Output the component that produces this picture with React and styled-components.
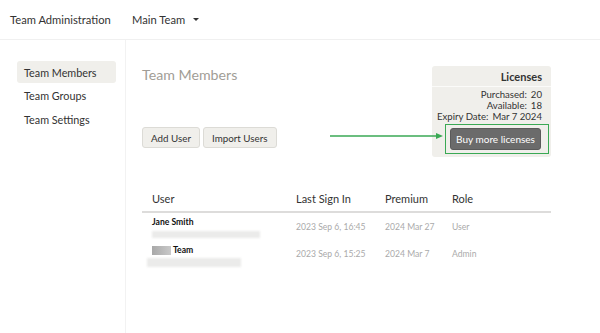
import React from "react";
import styled, { createGlobalStyle } from "styled-components";

const Global = createGlobalStyle`
  html, body { margin: 0; padding: 0; background: #fff; }
  body { font-family: Lato, "Open Sans", sans-serif; color: #333; }
  * { box-sizing: border-box; }
`;

const Page = styled.div`
  min-height: 100vh;
  display: flex;
  flex-direction: column;
`;

const TopBar = styled.header`
  height: 40px;
  display: flex;
  align-items: center;
  padding-left: 10px;
  border-bottom: 1px solid #f0f0f0;
  font-size: 11.2px;
  color: #333;
`;

const Brand = styled.div`
  width: 122px;
`;

const TeamPicker = styled.div`
  display: flex;
  align-items: center;
  gap: 8px;
`;

const Caret = styled.span`
  width: 0;
  height: 0;
  border-left: 3px solid transparent;
  border-right: 3px solid transparent;
  border-top: 3px solid #333;
`;

const Body = styled.div`
  flex: 1;
  display: flex;
`;

const Sidebar = styled.nav`
  width: 126px;
  border-right: 1px solid #f2f2f2;
  padding: 21px 9px 0 17px;
  display: flex;
  flex-direction: column;
  gap: 1.5px;
`;

const NavItem = styled.div`
  height: 22px;
  display: flex;
  align-items: center;
  padding-left: 7px;
  border-radius: 3px;
  font-size: 10.8px;
  color: #333;
  background: ${(p) => (p.$active ? "#f0efeb" : "transparent")};
`;

const Main = styled.main`
  flex: 1;
  padding: 26px 49px 0 16px;
  display: flex;
  flex-direction: column;
`;

const TopRow = styled.div`
  display: flex;
  justify-content: space-between;
  align-items: flex-start;
`;

const LeftCol = styled.div`
  display: flex;
  flex-direction: column;
`;

const Heading = styled.h1`
  margin: 0;
  font-size: 14.2px;
  font-weight: 400;
  color: #a19d96;
  line-height: 18px;
`;

const ButtonRow = styled.div`
  display: flex;
  gap: 3px;
  margin-top: 43px;
`;

const LightButton = styled.button`
  height: 21px;
  padding: 0 8px;
  font-family: inherit;
  font-size: 9.8px;
  color: #333;
  background: #f0efeb;
  border: 1px solid #dcdbd6;
  border-radius: 3px;
`;

const Card = styled.section`
  position: relative;
  width: 119px;
  background: #f0efeb;
  border-radius: 3px;
  padding-bottom: 7px;
  text-align: right;
  font-size: 9.6px;
  line-height: 11px;
  color: #333;
`;

const CardTitle = styled.div`
  font-weight: 700;
  font-size: 11px;
  padding: 5px 9px 4px 0;
  border-bottom: 1px solid #fbfbf9;
`;

const CardLines = styled.div`
  padding: 2px 9px 0 0;
`;

const InfoLine = styled.div`
  display: flex;
  justify-content: flex-end;
  gap: 4px;
`;

const BuyWrap = styled.div`
  position: relative;
  display: flex;
  justify-content: flex-end;
  padding: 6px 10px 0 0;
`;

const DarkButton = styled.button`
  width: 91px;
  height: 22px;
  font-family: inherit;
  font-size: 10px;
  color: #fff;
  background: #6b6b6b;
  border: 1px solid #5a5a5a;
  border-radius: 3px;
  padding: 0;
`;

const Highlight = styled.div`
  position: absolute;
  left: 13px;
  top: 2px;
  width: 104px;
  height: 30px;
  border: 1.5px solid #3aa954;
`;

const Arrow = styled.svg`
  position: absolute;
  left: -102px;
  top: 66px;
  overflow: visible;
`;

const Table = styled.div`
  margin-top: 28px;
  display: grid;
  grid-template-columns: 144px 89px 67px 1fr;
`;

const HeadCell = styled.div`
  height: 28px;
  display: flex;
  align-items: center;
  padding-left: 10px;
  font-size: 11px;
  color: #333;
  border-bottom: 2px solid #dddcdb;
`;

const Cell = styled.div`
  height: ${(p) => (p.$h ? p.$h : 27)}px;
  display: flex;
  align-items: center;
  padding-left: 10px;
  font-size: 8.6px;
  color: #aaa;
`;

const UserCell = styled.div`
  height: ${(p) => p.$h}px;
  padding: ${(p) => p.$pt}px 0 0 10px;
  display: flex;
  flex-direction: column;
`;

const NameLine = styled.div`
  display: flex;
  align-items: center;
  gap: 2px;
  font-size: 8.6px;
  font-weight: 700;
  color: #111;
  line-height: 11px;
`;

const Avatar = styled.span`
  width: 19px;
  height: 9px;
  background: linear-gradient(90deg, #a8a8a8, #c9c9c9);
`;

const Blur = styled.div`
  width: ${(p) => p.$w}px;
  height: ${(p) => p.$hh}px;
  margin-left: ${(p) => p.$ml}px;
  margin-top: ${(p) => p.$mt}px;
  background: #ebebea;
  filter: blur(1px);
`;

const info = [
  ["Purchased:", "20"],
  ["Available:", "18"],
  ["Expiry Date:", "Mar 7 2024"],
];

export default function App() {
  return (
    <Page>
      <Global />
      <TopBar>
        <Brand>Team Administration</Brand>
        <TeamPicker>
          Main Team <Caret />
        </TeamPicker>
      </TopBar>
      <Body>
        <Sidebar>
          <NavItem $active>Team Members</NavItem>
          <NavItem>Team Groups</NavItem>
          <NavItem>Team Settings</NavItem>
        </Sidebar>
        <Main>
          <TopRow>
            <LeftCol>
              <Heading>Team Members</Heading>
              <ButtonRow>
                <LightButton>Add User</LightButton>
                <LightButton>Import Users</LightButton>
              </ButtonRow>
            </LeftCol>
            <Card>
              <CardTitle>Licenses</CardTitle>
              <CardLines>
                {info.map(([k, v]) => (
                  <InfoLine key={k}>
                    <span>{k}</span>
                    <span>{v}</span>
                  </InfoLine>
                ))}
              </CardLines>
              <BuyWrap>
                <DarkButton>Buy more licenses</DarkButton>
                <Highlight />
              </BuyWrap>
              <Arrow width="114" height="8" viewBox="0 0 114 8">
                <line x1="0" y1="4" x2="108" y2="4" stroke="#3aa954" strokeWidth="1.5" />
                <polygon points="106,1 113,4 106,7" fill="#3aa954" />
              </Arrow>
            </Card>
          </TopRow>
          <Table>
            <HeadCell>User</HeadCell>
            <HeadCell>Last Sign In</HeadCell>
            <HeadCell>Premium</HeadCell>
            <HeadCell>Role</HeadCell>

            <UserCell $h={28} $pt={4}>
              <NameLine>Jane Smith</NameLine>
              <Blur $w={108} $hh={7} $ml={0} $mt={3} />
            </UserCell>
            <Cell $h={28}>2023 Sep 6, 16:45</Cell>
            <Cell $h={28}>2024 Mar 27</Cell>
            <Cell $h={28}>User</Cell>

            <UserCell $h={30} $pt={4}>
              <NameLine>
                <Avatar />
                Team
              </NameLine>
              <Blur $w={94} $hh={9} $ml={-5} $mt={2} />
            </UserCell>
            <Cell $h={26}>2023 Sep 6, 15:25</Cell>
            <Cell $h={26}>2024 Mar 7</Cell>
            <Cell $h={26}>Admin</Cell>
          </Table>
        </Main>
      </Body>
    </Page>
  );
}
